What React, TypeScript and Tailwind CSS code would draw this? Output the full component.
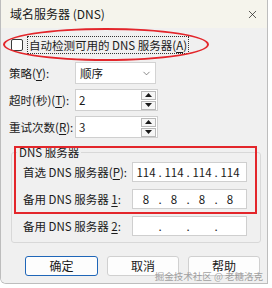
import { ChevronDown, X } from 'lucide-react'

const Key = ({ k }: { k: string }) => <span className="underline underline-offset-[2px]">{k}</span>

const Arrow = ({ up }: { up?: boolean }) => (
  <svg width="7" height="4" viewBox="0 0 7 4">
    <path d={up ? 'M0 4 L3.5 0 L7 4 Z' : 'M0 0 L3.5 4 L7 0 Z'} fill="#1a1a1a" />
  </svg>
)

const SpinBox = ({ value }: { value: string }) => (
  <div className="flex h-[22px] w-[83px] items-center justify-between border border-[#cfcfcf] bg-white pl-[3px] pr-px">
    <span>{value}</span>
    <div className="flex flex-col gap-px">
      <div className="flex h-[9px] w-[15px] items-center justify-center border border-[#b9b9b9] bg-[#f6f6f6]">
        <Arrow up />
      </div>
      <div className="flex h-[9px] w-[15px] items-center justify-center border border-[#b9b9b9] bg-[#f6f6f6]">
        <Arrow />
      </div>
    </div>
  </div>
)

const IpBox = ({ parts }: { parts: string[] }) => (
  <div className="flex h-[20px] w-[115px] items-center border border-[#cfcfcf] bg-white pl-[3px]">
    {parts.map((p, i) => (
      <div key={i} className="flex items-center">
        {i > 0 && <span className="w-[8px] text-center">.</span>}
        <span className="w-[20px] text-center">{p}</span>
      </div>
    ))}
  </div>
)

const FormRow = ({ label, children }: { label: React.ReactNode; children: React.ReactNode }) => (
  <div className="flex items-center">
    <div className="w-[74px] whitespace-nowrap pl-[8px]">{label}</div>
    {children}
  </div>
)

const DnsRow = ({ label, parts }: { label: React.ReactNode; parts: string[] }) => (
  <div className="flex h-[20px] items-center">
    <div className="w-[109px] whitespace-nowrap">{label}</div>
    <IpBox parts={parts} />
  </div>
)

export default function App() {
  return (
    <div className="relative h-[288px] w-[272px] overflow-hidden bg-white font-['Microsoft_YaHei_UI','Noto_Sans_CJK_SC',sans-serif] text-[11.5px] leading-[16px] text-[#1a1a1a]">
      <div className="flex h-[284px] w-[268px] flex-col overflow-hidden rounded-bl-[6px] border-r border-b border-l border-[#bdbdbd]">
        <div className="flex h-[28px] shrink-0 items-center justify-between bg-[#f5f4ec] pl-[9px] pr-[8px]">
          <span className="text-[12px]">域名服务器 (DNS)</span>
          <X className="h-[13px] w-[13px]" strokeWidth={1.3} />
        </div>

        <div className="flex flex-1 flex-col bg-[#f0f0f0]">
          <div className="mt-[9px] flex h-[16px] items-center pl-[10px]">
            <div className="h-[12px] w-[12px] rounded-[2px] border border-[#3a3a3a] bg-white" />
            <span className="ml-[4px] whitespace-nowrap border border-dotted border-[#333] px-px">
              自动检测可用的 DNS 服务器(<Key k="A" />)
            </span>
          </div>

          <div className="mt-[9px] flex flex-col gap-[5px]">
            <FormRow label={<>策略(<Key k="Y" />):</>}>
              <div className="flex h-[22px] w-[81px] items-center justify-between border border-[#d3d3d3] bg-white pl-[4px] pr-[3px]">
                <span>顺序</span>
                <ChevronDown className="h-[11px] w-[11px] text-[#555]" strokeWidth={1.5} />
              </div>
            </FormRow>
            <FormRow label={<>超时(秒)(<Key k="T" />):</>}>
              <SpinBox value="2" />
            </FormRow>
            <FormRow label={<>重试次数(<Key k="R" />):</>}>
              <SpinBox value="3" />
            </FormRow>
          </div>

          <fieldset className="ml-[10px] mt-[6px] w-[250px] rounded-[3px] border border-[#d8d8d8] pb-[6px] pl-[11px]">
            <legend className="-ml-[6px] px-[2px]">DNS 服务器</legend>
            <div className="mt-[2px] flex flex-col gap-[7px]">
              <DnsRow label={<>首选 DNS 服务器(<Key k="P" />):</>} parts={['114', '114', '114', '114']} />
              <DnsRow label={<>备用 DNS 服务器 <Key k="1" />:</>} parts={['8', '8', '8', '8']} />
              <DnsRow label={<>备用 DNS 服务器 <Key k="2" />:</>} parts={['', '', '', '']} />
            </div>
          </fieldset>

          <div className="mt-[13px] flex gap-[9px] pl-[24px]">
            <button className="h-[20px] w-[73px] rounded-[3px] border border-[#1f66b8] bg-[#fdfdfd] text-[12px] leading-[16px]">确定</button>
            <button className="h-[20px] w-[72px] rounded-[3px] border border-[#d0d0d0] bg-[#fdfdfd] text-[12px] leading-[16px]">取消</button>
            <button className="h-[20px] w-[72px] rounded-[3px] border border-[#d0d0d0] bg-[#fdfdfd] text-[12px] leading-[16px]">帮助</button>
          </div>
        </div>
      </div>

      {/* annotations */}
      <div className="pointer-events-none absolute left-[3px] top-[28px] h-[33px] w-[206px] rounded-[50%] border-2 border-[#e3262b]" />
      <div className="pointer-events-none absolute left-[14px] top-[146px] h-[68px] w-[243px] border-2 border-[#e3262b]" />
      <div className="pointer-events-none absolute right-[9px] top-[269px] text-[9.5px] leading-[14px] text-[#8a8a8a]/80">
        掘金技术社区 @ 老糖洛克
      </div>
    </div>
  )
}
